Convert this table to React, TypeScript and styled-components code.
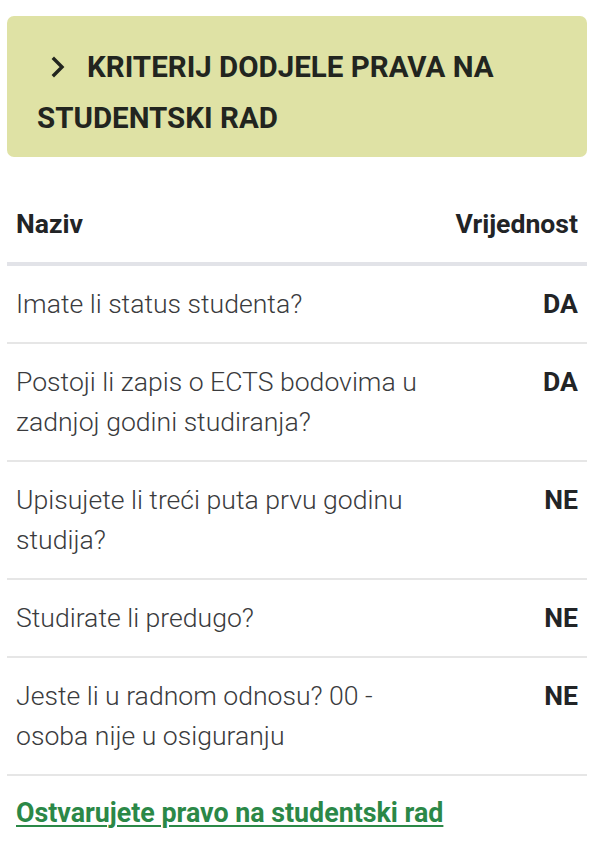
import React from "react";
import styled, { createGlobalStyle } from "styled-components";

const GlobalStyle = createGlobalStyle`
	html, body {
		margin: 0;
		padding: 0;
		background: #ffffff;
	}
	body {
		font-family: Roboto, "Liberation Sans", sans-serif;
		color: #222426;
	}
`;

const rows = [
	{ name: "Imate li status studenta?", value: "DA" },
	{ name: "Postoji li zapis o ECTS bodovima u zadnjoj godini studiranja?", value: "DA" },
	{ name: "Upisujete li treći puta prvu godinu studija?", value: "NE" },
	{ name: "Studirate li predugo?", value: "NE" },
	{ name: "Jeste li u radnom odnosu? 00 - osoba nije u osiguranju", value: "NE" },
];

const Page = styled.div`
	padding: 16px 9px 0 7px;
`;

const Panel = styled.div`
	background: #dfe2a5;
	border-radius: 7px;
	padding: 26px 20px 13px 30px;
`;

const PanelTitle = styled.h2`
	margin: 0;
	font-size: 29.5px;
	line-height: 51px;
	font-weight: 700;
	color: #22251f;
	text-transform: uppercase;
`;

const Chevron = styled.svg`
	display: inline-block;
	width: 14px;
	height: 22px;
	margin: 0 22px 0 14px;
	vertical-align: -1px;
`;

const Table = styled.table`
	width: 100%;
	margin-top: 29px;
	border-collapse: collapse;
	font-size: 26.6px;
	line-height: 40px;
`;

const HeadCell = styled.th<{ $right?: boolean }>`
	padding: 18px 9px;
	text-align: ${({ $right }) => ($right ? "right" : "left")};
	font-weight: 700;
	color: #222426;
	border-bottom: 4px solid #e2e3e8;
`;

const Row = styled.tr`
	border-bottom: 2px solid #e6e6e6;
`;

const NameCell = styled.td`
	padding: 18px 9px;
	font-weight: 300;
	color: #3a3b3d;
	vertical-align: top;
`;

const ValueCell = styled.td`
	padding: 18px 9px;
	text-align: right;
	font-weight: 700;
	color: #222426;
	vertical-align: top;
	white-space: nowrap;
`;

const Result = styled.a`
	display: inline-block;
	margin: 17px 0 0 9px;
	font-size: 26.8px;
	line-height: 40px;
	font-weight: 700;
	color: #2b8847;
	text-decoration: underline;
	text-decoration-thickness: 2px;
	text-underline-offset: 3px;
`;

export default function App() {
	return (
		<>
			<GlobalStyle />
			<Page>
				<Panel>
					<PanelTitle>
						<Chevron viewBox="0 0 14 22" fill="none">
							<path d="M3 3l8 8-8 8" stroke="#22251f" strokeWidth="3.4" strokeLinecap="square" />
						</Chevron>
						Kriterij dodjele prava na studentski rad
					</PanelTitle>
				</Panel>
				<Table>
					<thead>
						<tr>
							<HeadCell>Naziv</HeadCell>
							<HeadCell $right>Vrijednost</HeadCell>
						</tr>
					</thead>
					<tbody>
						{rows.map((r) => (
							<Row key={r.name}>
								<NameCell>{r.name}</NameCell>
								<ValueCell>{r.value}</ValueCell>
							</Row>
						))}
					</tbody>
				</Table>
				<Result href="#">Ostvarujete pravo na studentski rad</Result>
			</Page>
		</>
	);
}
